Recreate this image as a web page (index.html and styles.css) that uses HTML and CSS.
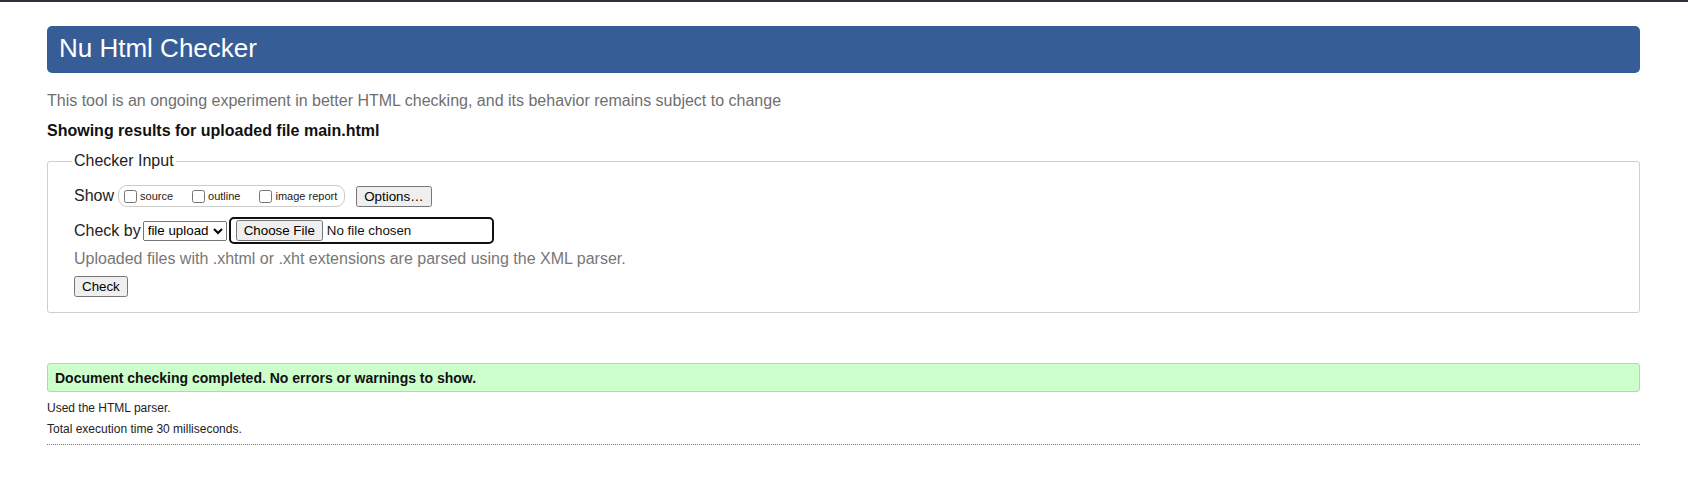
FILE: index.html
```html
<!DOCTYPE html>
<html lang="en">
<head>
<meta charset="utf-8">
<title>Nu Html Checker</title>
<link rel="stylesheet" href="styles.css">
</head>
<body>
<div class="page">
  <h1 class="title">Nu Html Checker</h1>
  <p class="intro">This tool is an ongoing experiment in better HTML checking, and its behavior remains subject to change</p>
  <p class="showing">Showing results for uploaded file main.html</p>
  <form class="checker">
    <fieldset class="input-box">
      <legend class="legend">Checker Input</legend>
      <div class="row show-row">
        <span class="label">Show</span>
        <span class="pill">
          <label class="opt"><input type="checkbox" class="cb">source</label>
          <label class="opt"><input type="checkbox" class="cb">outline</label>
          <label class="opt last"><input type="checkbox" class="cb">image report</label>
        </span>
        <button type="button" class="btn options">Options…</button>
      </div>
      <div class="row check-row">
        <span class="label label-tight">Check by</span>
        <select class="select"><option>file upload</option></select>
        <span class="file"><button type="button" class="btn file-btn">Choose File</button><span class="file-text">No file chosen</span></span>
      </div>
      <p class="hint">Uploaded files with .xhtml or .xht extensions are parsed using the XML parser.</p>
      <button type="button" class="btn check">Check</button>
    </fieldset>
  </form>
  <p class="success">Document checking completed. No errors or warnings to show.</p>
  <p class="meta">Used the HTML parser.</p>
  <p class="meta">Total execution time 30 milliseconds.</p>
  <hr class="rule">
</div>
</body>
</html>
```

FILE: styles.css
```css
html, body {
  margin: 0;
  padding: 0;
  background: #fff;
}
body {
  border-top: 2px solid #2e303b;
  font-family: "Liberation Sans", Arial, sans-serif;
  color: #222;
}
.page {
  padding: 0 48px 0 47px;
}
.title {
  margin: 24px 0 0;
  height: 47px;
  box-sizing: border-box;
  padding: 0 12px 2px;
  line-height: 45px;
  font-size: 26px;
  font-weight: normal;
  color: #fff;
  background: #365d95;
  border-radius: 5px;
}
.intro {
  margin: 18px 0 0;
  font-size: 16px;
  line-height: 20px;
  color: #6f6f6f;
}
.showing {
  margin: 10px 0 0;
  font-size: 16px;
  line-height: 20px;
  font-weight: bold;
  color: #111;
}
.checker {
  margin: 10px 0 0;
}
.input-box {
  margin: 0;
  padding: 0 26px 15px;
  border: 1px solid #cfcfcf;
  border-radius: 3px;
  min-width: 0;
}
.legend {
  margin-left: -2px;
  padding: 0 2px 1px;
  font-size: 16px;
  line-height: 20px;
  color: #222;
}
.row {
  display: flex;
  align-items: center;
}
.show-row {
  margin-top: 12px;
  height: 24px;
}
.label {
  font-size: 16px;
  line-height: 20px;
  margin-right: 4px;
}
.label-tight {
  margin-right: 2px;
}
.pill {
  display: inline-flex;
  align-items: center;
  height: 22px;
  box-sizing: border-box;
  padding: 0 7px 0 1px;
  border: 1px solid #cccccc;
  border-radius: 9px;
  font-size: 11px;
}
.opt {
  display: inline-flex;
  align-items: center;
  margin-right: 15px;
  color: #222;
}
.opt.last {
  margin-right: 0;
}
.cb {
  width: 13px;
  height: 13px;
  margin: 0 3px 0 4px;
}
.btn {
  font-family: "Liberation Sans", Arial, sans-serif;
  font-size: 13.333px;
}
.options {
  margin-left: 11px;
}
.check-row {
  margin-top: 9px;
  height: 27px;
}
.select {
  font-family: "Liberation Sans", Arial, sans-serif;
  font-size: 13.333px;
  width: 84px;
  height: 20px;
  margin: 0 2px 0 0;
}
.file {
  display: inline-flex;
  align-items: center;
  width: 265px;
  height: 27px;
  box-sizing: border-box;
  padding-left: 5px;
  border: 2px solid #101010;
  border-radius: 5px;
}
.file-btn {
  margin: 0;
}
.file-text {
  margin-left: 4px;
  font-size: 13.333px;
  color: #111;
}
.hint {
  margin: 5px 0 0;
  font-size: 16px;
  line-height: 20px;
  color: #777;
}
.check {
  margin-top: 7px;
}
.success {
  margin: 50px 0 0;
  padding: 2px 7px 0;
  line-height: 25px;
  font-size: 14px;
  font-weight: bold;
  color: #111;
  background: #ccffcc;
  border: 1px solid #c8c8c8;
  border-radius: 3px;
}
.meta {
  margin: 0;
  font-size: 12px;
  line-height: 21px;
  color: #222;
}
.success + .meta {
  margin-top: 6px;
}
.rule {
  margin: 4px 0 0;
  border: 0;
  border-top: 1px dotted #777;
  height: 0;
}
```
